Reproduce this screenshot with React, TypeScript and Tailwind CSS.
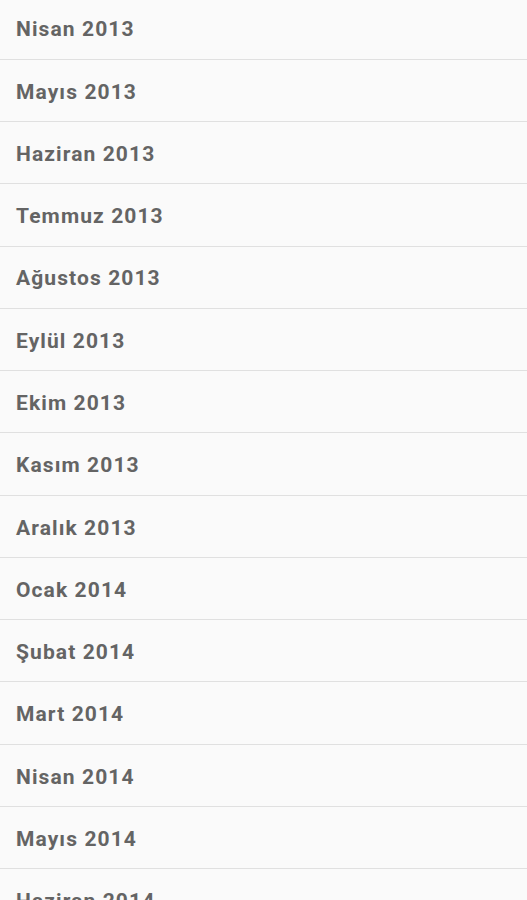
const items = [
  "Nisan 2013",
  "Mayıs 2013",
  "Haziran 2013",
  "Temmuz 2013",
  "Ağustos 2013",
  "Eylül 2013",
  "Ekim 2013",
  "Kasım 2013",
  "Aralık 2013",
  "Ocak 2014",
  "Şubat 2014",
  "Mart 2014",
  "Nisan 2014",
  "Mayıs 2014",
  "Haziran 2014",
];

export default function App() {
  return (
    <div className="h-[900px] w-full overflow-hidden bg-[#fafafa]" style={{ fontFamily: "Roboto, 'Noto Sans', sans-serif" }}>
      <div className="-mt-[2.5px] flex flex-col">
        {items.map((t) => (
          <div
            key={t}
            className="flex h-[62.27px] shrink-0 items-center border-b-[1.5px] border-[#e0e0e0] pl-4 pt-[4px] text-[21px] font-bold tracking-[1.1px] text-[#646464]"
          >
            {t}
          </div>
        ))}
      </div>
    </div>
  );
}
